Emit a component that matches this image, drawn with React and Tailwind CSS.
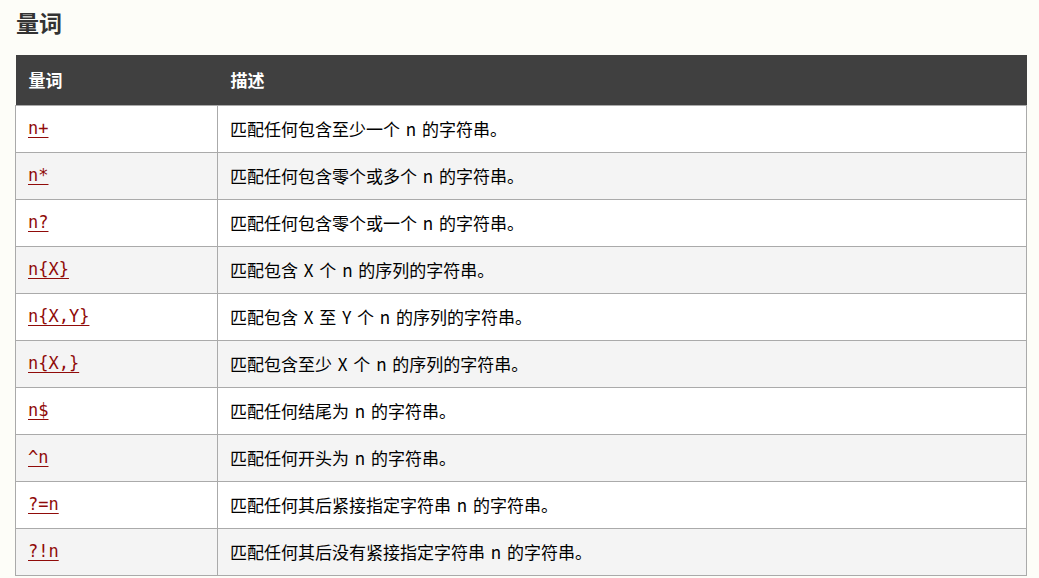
import React from 'react';

const rows = [
  ['n+', '匹配任何包含至少一个 n 的字符串。'],
  ['n*', '匹配任何包含零个或多个 n 的字符串。'],
  ['n?', '匹配任何包含零个或一个 n 的字符串。'],
  ['n{X}', '匹配包含 X 个 n 的序列的字符串。'],
  ['n{X,Y}', '匹配包含 X 至 Y 个 n 的序列的字符串。'],
  ['n{X,}', '匹配包含至少 X 个 n 的序列的字符串。'],
  ['n$', '匹配任何结尾为 n 的字符串。'],
  ['^n', '匹配任何开头为 n 的字符串。'],
  ['?=n', '匹配任何其后紧接指定字符串 n 的字符串。'],
  ['?!n', '匹配任何其后没有紧接指定字符串 n 的字符串。'],
];

const cjk = { fontFamily: '"Noto Sans CJK SC", sans-serif' };

export default function App() {
  return (
    <div className="min-h-[578px] w-[1039px] bg-[#fdfdf8] pl-[15px] pt-[6px]" style={cjk}>
      <h2 className="text-[23px] font-bold leading-[32px] text-[#333] pl-px">量词</h2>
      <table className="mt-[17px] w-[1012px] border-collapse table-fixed">
        <thead>
          <tr className="h-[50px] bg-[#404040] text-white">
            <th className="w-[202px] pl-[13px] text-left text-[17px] font-bold">量词</th>
            <th className="pl-[13px] text-left text-[17px] font-bold">描述</th>
          </tr>
        </thead>
        <tbody>
          {rows.map(([q, d], i) => (
            <tr key={q} className={i % 2 ? 'h-[47px] bg-[#f4f4f4]' : 'h-[47px] bg-white'}>
              <td className="border border-[#aaa] pl-[12px] align-middle">
                <a
                  href="#"
                  className="text-[17px] text-[#900b09] underline decoration-1 underline-offset-[3px]"
                  style={{ fontFamily: '"DejaVu Sans Mono", monospace' }}
                >
                  {q}
                </a>
              </td>
              <td className="border border-[#aaa] pl-[12px] text-[17px] [word-spacing:2px] text-black align-middle">
                {d}
              </td>
            </tr>
          ))}
        </tbody>
      </table>
    </div>
  );
}
